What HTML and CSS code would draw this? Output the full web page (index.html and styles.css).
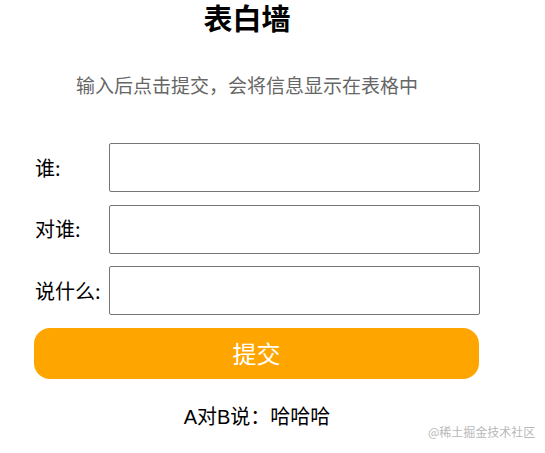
FILE: index.html
```html
<!DOCTYPE html>
<html lang="zh">
<head>
<meta charset="utf-8">
<title>表白墙</title>
<link rel="stylesheet" href="styles.css">
</head>
<body>
<div class="container">
  <h1 class="title">表白墙</h1>
  <p class="tip">输入后点击提交，会将信息显示在表格中</p>
  <div class="form">
    <div class="row"><span class="label">谁:</span><input class="field" type="text"></div>
    <div class="row"><span class="label">对谁:</span><input class="field" type="text"></div>
    <div class="row"><span class="label">说什么:</span><input class="field" type="text"></div>
    <button class="submit" type="button">提交</button>
  </div>
  <div class="result">A对B说：哈哈哈</div>
</div>
<div class="watermark">@稀土掘金技术社区</div>
</body>
</html>
```
FILE: styles.css
```css
html, body {
  margin: 0;
  padding: 0;
  background: #fff;
}
body {
  font-family: "Noto Sans CJK SC", "Noto Sans", sans-serif;
  color: #000;
  position: relative;
  height: 453px;
  overflow: hidden;
}
.container {
  width: 446px;
  margin-left: 34px;
}
.title {
  margin: 0;
  padding-right: 20px;
  font-size: 29px;
  line-height: 34px;
  font-weight: bold;
  text-align: center;
}
.tip {
  margin: 37px 0 0;
  padding-right: 20px;
  font-size: 19px;
  line-height: 28px;
  color: #666;
  text-align: center;
}
.form {
  margin-top: 44px;
  display: flex;
  flex-direction: column;
  gap: 12.5px;
}
.row {
  display: flex;
  align-items: center;
  height: 49px;
  padding-left: 1px;
}
.label {
  width: 74px;
  font-size: 20px;
  line-height: 28px;
  font-family: "Noto Sans CJK SC", sans-serif;
}
.field {
  width: 372px;
  height: 49px;
  box-sizing: border-box;
  border: 1px solid #767676;
  border-radius: 2px;
  margin: 0;
  padding: 0 4px;
  font-size: 16px;
  background: #fff;
}
.submit {
  width: 445px;
  height: 51px;
  border: none;
  border-radius: 16px;
  background: #ffa500;
  color: #fff;
  font-family: "Noto Sans CJK SC", sans-serif;
  font-size: 24px;
  line-height: 30px;
  padding: 0;
  margin: 0;
}
.result {
  margin-top: 24px;
  font-size: 20px;
  line-height: 28px;
  text-align: center;
  font-family: "Liberation Sans", "Noto Sans CJK SC", sans-serif;
}
.watermark {
  position: absolute;
  left: 428px;
  top: 424px;
  font-size: 12px;
  line-height: 16px;
  color: #b8b8b8;
  font-family: "Noto Sans CJK SC", sans-serif;
}
```
